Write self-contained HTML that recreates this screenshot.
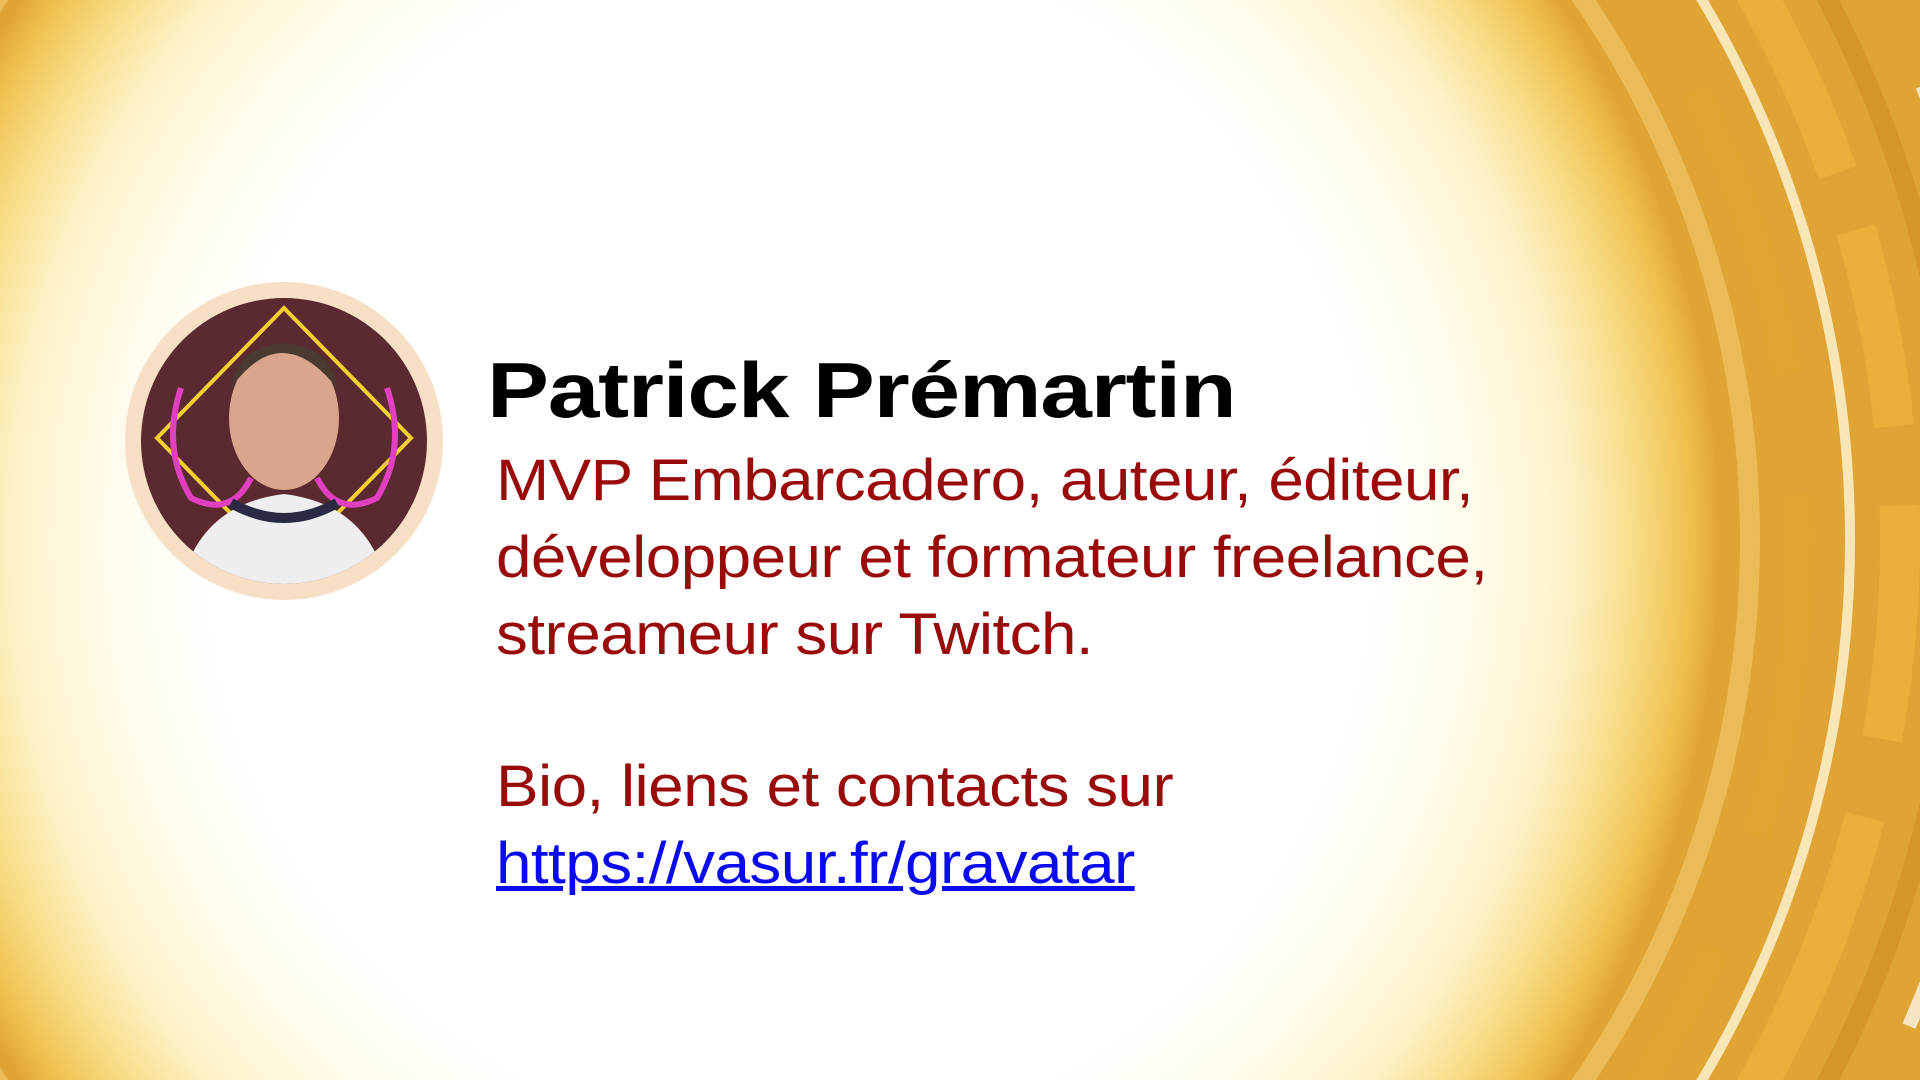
<!DOCTYPE html>
<html><head><meta charset="utf-8"><style>
html,body{margin:0;padding:0;width:1920px;height:1080px;overflow:hidden}
#w{position:absolute;left:0;top:0;width:1920px;height:1080px;overflow:hidden;background:radial-gradient(ellipse 930px 960px at 790px 540px,#ffffff 0%,#ffffff 62%,#fffbea 74%,#fdf1c6 84%,#f8dc86 91%,#efbf4c 97%,#e0a434 100%);font-family:"Liberation Sans",sans-serif}
svg.bg{position:absolute;left:0;top:0}
.av{position:absolute;left:125px;top:282px;width:318px;height:318px;border-radius:50%;background:#f7dfc6}
.ph{position:absolute;left:16px;top:16px;width:286px;height:286px;border-radius:50%;overflow:hidden}
.name{position:absolute;left:487px;top:345px;font-size:78px;font-weight:bold;color:#000;letter-spacing:-1px;white-space:nowrap;transform:scaleX(1.19);transform-origin:left top}
.t{position:absolute;left:496px;font-size:58px;color:#990a0a;white-space:nowrap;letter-spacing:-0.5px;transform:scaleX(1.1);transform-origin:left top}
a{color:#0a0aee;text-decoration:underline}
</style></head><body><div id="w">
<svg class="bg" width="1920" height="1080" viewBox="0 0 1920 1080">
<g fill="none" transform="translate(790 540)">
<circle r="960" stroke="#f5d27a" stroke-width="20" opacity=".5"/>
<circle r="1010" stroke="#e3a530" stroke-width="30" stroke-dasharray="300 120" opacity=".55"/>
<circle r="1060" stroke="#fff6d8" stroke-width="10" opacity=".8"/>
<circle r="1110" stroke="#f0b840" stroke-width="40" stroke-dasharray="200 80 400 60" opacity=".6"/>
<circle r="1170" stroke="#c9861e" stroke-width="20" opacity=".5"/>
<circle r="1220" stroke="#fff" stroke-width="14" stroke-dasharray="500 300" opacity=".7"/>
</g>
</svg>
<div class="av"><div class="ph">
<svg width="286" height="286" viewBox="0 0 286 286">
<rect width="286" height="286" fill="#5a2a30"/>
<path d="M143 10 L270 140 L143 270 L16 140Z" fill="none" stroke="#f5d030" stroke-width="4"/>
<path d="M40 90 q-20 60 10 110 q40 20 60-20 M246 90 q20 60 -10 110 q-40 20 -60 -20" fill="none" stroke="#e040c0" stroke-width="6"/>
<ellipse cx="143" cy="120" rx="55" ry="72" fill="#d9a58c"/>
<path d="M90 90 q50-70 106 0 q-5-40-53-45 q-48 5-53 45z" fill="#4a3a30"/>
<path d="M40 286 q20-80 103-90 q83 10 103 90z" fill="#eeeef0"/>
<path d="M90 205 q53 30 106 0" stroke="#2a2a44" stroke-width="10" fill="none"/>
</svg></div></div>
<div class="name">Patrick Prémartin</div>
<div class="t" style="top:447px">MVP Embarcadero, auteur, éditeur,</div>
<div class="t" style="top:524px">développeur et formateur freelance,</div>
<div class="t" style="top:601px">streameur sur Twitch.</div>
<div class="t" style="top:753px">Bio, liens et contacts sur</div>
<div class="t" style="top:830px"><a>https://vasur.fr/gravatar</a></div>
</div></body></html>
